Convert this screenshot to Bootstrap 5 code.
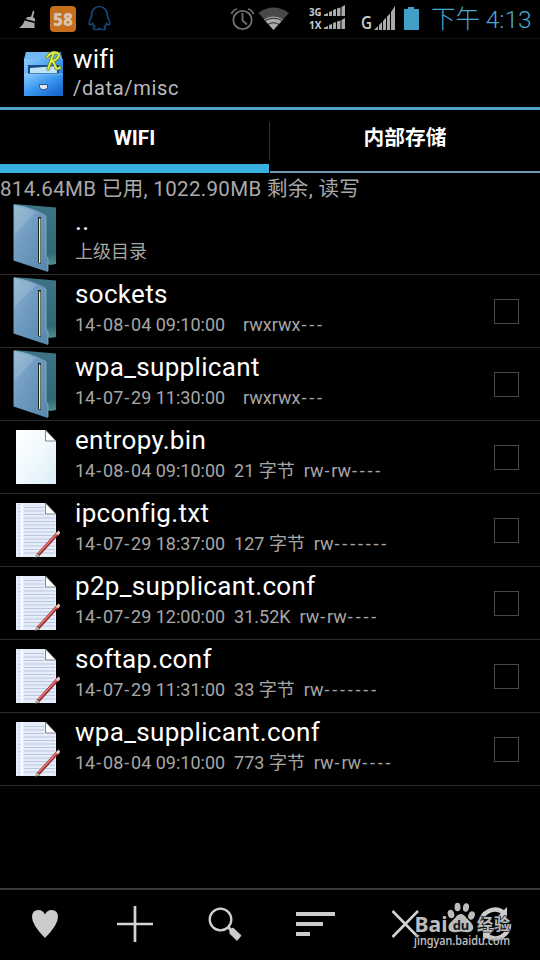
<!DOCTYPE html>
<html lang="zh-CN">
<head>
<meta charset="utf-8">
<meta name="viewport" content="width=device-width, initial-scale=1">
<title>wifi</title>
<link href="https://cdn.jsdelivr.net/npm/bootstrap@5.3.0/dist/css/bootstrap.min.css" rel="stylesheet">
<style>
body{background:#000;color:#fff;font-family:Roboto,"Noto Sans CJK SC",sans-serif;line-height:1}
.screen{width:540px;height:960px;overflow:hidden}
.screen svg{display:block;flex:none}
.statusbar{height:39px;border-bottom:1px solid #111;padding-left:18px}
.clock{color:#4aa9cf;font-size:24.5px;font-weight:300;white-space:nowrap;line-height:39px;margin-left:12px;letter-spacing:-.05px}
.appbar{height:71px;border-bottom:3px solid #4fa5c8;padding-left:22px}
.apptitle{font-size:26px;line-height:33px;letter-spacing:.1px}
.apppath{font-size:20px;line-height:25px;letter-spacing:.7px;color:#bbb}
.tabs{height:63px}
.tab{font-size:20.700px;font-weight:700;line-height:56px;border:0 solid #38b1e0;text-align:center}
.tab-on{width:269px;height:63px;border-bottom-width:9px}
.tab-off{width:270px;border-bottom:2px solid #6f9ab8}
.tabsep{width:1px;height:38px;background:#333;margin-top:12px}
.usage{height:29px;font-size:20.500px;line-height:32px;color:#aaa;white-space:pre;letter-spacing:.34px}
.entry{height:73px;border-bottom:1px solid #2c2c2c;padding-left:12px}
.entry-text{width:414px;margin-left:15px}
.entry-name{font-size:26px;line-height:32px;letter-spacing:.32px;margin-top:3px}
.entry-info{font-size:18px;line-height:22px;margin-top:4px;color:#a6a6a6;white-space:pre}
.dash{letter-spacing:2.800px;margin-left:1px;margin-right:-1px}
.box{width:25px;height:25px;border:1px solid #484848;margin:24px 0 0 5px}
.toolbar{height:72px;border-top:2px solid #393939}
.tool{width:90px}
.stamp{left:405px;top:890px}
.stamp text{font-family:"Noto Sans","Noto Sans CJK SC",sans-serif}
</style>
</head>
<body>
<svg width="0" height="0" class="position-absolute">
<defs>
<linearGradient id="gf" x1="0" y1="0" x2="1" y2="1"><stop offset="0" stop-color="#8fb5d0"/><stop offset=".45" stop-color="#6e9abf"/><stop offset="1" stop-color="#5687ad"/></linearGradient>
<linearGradient id="gb" x1="0" y1="0" x2="0" y2="1"><stop offset="0" stop-color="#3f7486"/><stop offset=".8" stop-color="#316777"/><stop offset="1" stop-color="#4d8f90"/></linearGradient>
<linearGradient id="gp" x1="0" y1="0" x2="1" y2="1"><stop offset="0" stop-color="#fff"/><stop offset=".5" stop-color="#f0f9fd"/><stop offset="1" stop-color="#dceef8"/></linearGradient>
<linearGradient id="gc" x1="0" y1="0" x2="1" y2="1"><stop offset="0" stop-color="#8accff"/><stop offset=".5" stop-color="#3b98ee"/><stop offset="1" stop-color="#1461c8"/></linearGradient>
<symbol id="folder" viewBox="0 0 48 72"><path d="M2 2 44 5.500V62l-6 1L8 50z" fill="url(#gb)"/><path d="M1.500 2.500Q20 5 34 13V54l2 3V70L1.500 58.500z" fill="url(#gf)"/><path d="M3 4Q14 6 24 10L3 32z" fill="#fff" opacity=".13"/><path d="M34 14V54l2 3V69" stroke="#8ab6c9" fill="none" stroke-width=".8"/><path d="M26 15h3v47l-3-1z" fill="#182829"/><path d="M27 16.500h1.400v44.500H27z" fill="#f2efb2"/></symbol>
<symbol id="page" viewBox="0 0 48 72"><path d="M4 9H33.500L44 20V63H4z" fill="url(#gp)"/><path d="M33.500 9V20H44z" fill="#fff" stroke="#666" stroke-width=".8"/></symbol>
<symbol id="note" viewBox="0 0 48 72"><path d="M4 9H33.500L44 20V63H4z" fill="#e6edfa"/><path d="M12 13.500H32M12 17H32M12 20.500H32M12 24H43M12 27.500H43M12 31H43M12 34.500H43M12 38H43M12 41.500H43M12 45H43M12 48.500H43M12 52H43M12 55.500H43M12 59H43" stroke="#bdc6df" stroke-width="1"/><path d="M7 10V63" stroke="#c3cce2" stroke-width="2" stroke-dasharray="1 2.500"/><path d="M10 9V63" stroke="#fff" stroke-width="1.500"/><path d="M33.500 9V20H44z" fill="#fff" stroke="#666" stroke-width=".8"/><path d="M26 61 46 39" stroke="#8d2f31" stroke-width="3.400"/><path d="M26.500 59.500 45.500 39" stroke="#e8706b" stroke-width="1.800"/><path d="M45 40.500 47.500 37.500" stroke="#e5c9bd" stroke-width="3"/><path d="M23.500 63.500 25 59.500 28 62z" fill="#d8c7a8" stroke="#555" stroke-width=".5"/></symbol>
</defs>
</svg>
<main class="screen d-flex flex-column position-relative">
<header class="statusbar d-flex">
<svg width="401" height="38" viewBox="18 0 401 38">
<path d="M33 10.500l1.500 1-1.500 5.500 2 2v2.500l-9.500-2.500 2-2 3.500-.3zM24.500 20.500l10 2.500V28H19q4-2.500 5.500-7.500z" fill="#aaa"/>
<rect x="50" y="6" width="26" height="26" rx="4" fill="#c56f1c"/>
<text x="63" y="25.500" text-anchor="middle" font-family="Open Sans,sans-serif" font-weight="800" font-size="17" fill="#d8c5b0">58</text>
<path d="M91.500 17C90.500 3 108 3 107.500 17q3 5 2 7.500-1 1-3-1-.5 2-2 3 2 3-.5 3h-3l-1.500-1-1.500 1h-3q-3-1-.5-3-1.500-1-2-3-2 2-3 1-1-3 2-7.500z" fill="none" stroke="#184475" stroke-width="1.700"/>
<g fill="none" stroke="#707070" stroke-width="1.800"><circle cx="242.500" cy="20" r="9.200"/><path d="M242.500 13v7.500l4.500 4M231.500 14Q233 10 237 9M253.500 14Q252 10 248 9"/></g>
<path d="M273.500 30 258.500 13Q273.500 2 289 13z" fill="#484848"/><path d="M273.500 30 264 19.500Q273.500 13.500 283 19.500z" fill="#aaa"/><path d="M265 20.500Q273.500 16 282 20.500M268 24.500Q273.500 21 279 24.500" stroke="#222" fill="none"/>
<g fill="#ccc" font-family="Open Sans,sans-serif" font-weight="700" font-size="11"><text x="309" y="16" textLength="12.500" lengthAdjust="spacingAndGlyphs">3G</text><text x="309" y="29" textLength="12.500" lengthAdjust="spacingAndGlyphs">1X</text></g>
<g fill="#aaa"><path d="M324 16v-1.500l4-1.500v3zM329 16v-4l3-1v5zM333 16v-6l3-1v7zM337 16V8.500l3.500-1V16zM341.500 16V7l3.500-2v11zM324 29v-1.500l4-1.500v3zM329 29v-4l3-1v5zM333 29v-6l3-1v7zM337 29v-7.500l3.500-1V29zM341.500 29v-9l3.500-2v11z"/>
<path d="M374 30l4-4v4zM379 30v-5l3-3v8zM383 30v-9l3-3.500V30zM387 30V16.500l3-3V30zM391 30V12l4-6v24z"/></g>
<text x="361" y="29" font-family="Open Sans,sans-serif" font-weight="600" font-size="18" fill="#ccc" textLength="11" lengthAdjust="spacingAndGlyphs">G</text>
<path d="M408 7h6v2h5v21h-15V9h4z" fill="#429fc6"/>
</svg>
<div class="clock">下午 4:13</div>
</header>
<section class="appbar d-flex align-items-start">
<svg width="51" height="68" viewBox="22 0 51 68">
<path d="M26 13H61L63 25V57H24V25z" fill="#2e86d8"/><path d="M26 13H60L62 20H24z" fill="#71b8f4"/><path d="M24 20H63V57H24z" fill="url(#gc)"/><path d="M28 26H59V35H28z" fill="#174a84"/><path d="M30 29 57 27V34H30z" fill="#bfe4f9"/><path d="M24.500 35H62.500V55H24.500z" fill="url(#gc)"/><path d="M24.500 35H62.500" stroke="#92cefb" stroke-width=".8"/><path d="M39.500 45.500h8v3q-1 2-3 2h-2q-3 0-3-3z" fill="#dfe5ec" stroke="#153d78" stroke-width=".8"/>
<path d="M47 18q3-4 7-4.500 7 0 4 5-2 3-7 4 3 0 4 4 1 5 5 2M53.500 14.500 48 30" fill="none" stroke="#587223" stroke-width="3.400" stroke-linecap="round"/><path d="M47 18q3-4 7-4.500 7 0 4 5-2 3-7 4 3 0 4 4 1 5 5 2M53.500 14.500 48 30" fill="none" stroke="#dfee48" stroke-width="2" stroke-linecap="round"/>
</svg>
<div class="pt-1"><div class="apptitle">wifi</div><div class="apppath">/data/misc</div></div>
</section>
<nav class="tabs d-flex"><div class="tab tab-on">WIFI</div><div class="tabsep"></div><div class="tab tab-off">内部存储</div></nav>
<div class="usage">814.64MB 已用, 1022.90MB 剩余, 读写</div>
<section class="flex-grow-1">
<div class="entry d-flex"><svg width="48" height="72"><use href="#folder"/></svg><div class="entry-text"><div class="entry-name">..</div><div class="entry-info">上级目录</div></div></div>
<div class="entry d-flex"><svg width="48" height="72"><use href="#folder"/></svg><div class="entry-text"><div class="entry-name">sockets</div><div class="entry-info">14<span class="dash">-</span>08<span class="dash">-</span>04 09:10:00    rwxrwx<span class="dash">---</span></div></div><div class="box"></div></div>
<div class="entry d-flex"><svg width="48" height="72"><use href="#folder"/></svg><div class="entry-text"><div class="entry-name">wpa_supplicant</div><div class="entry-info">14<span class="dash">-</span>07<span class="dash">-</span>29 11:30:00    rwxrwx<span class="dash">---</span></div></div><div class="box"></div></div>
<div class="entry d-flex"><svg width="48" height="72"><use href="#page"/></svg><div class="entry-text"><div class="entry-name">entropy.bin</div><div class="entry-info">14<span class="dash">-</span>08<span class="dash">-</span>04 09:10:00  21 字节  rw<span class="dash">-</span>rw<span class="dash">----</span></div></div><div class="box"></div></div>
<div class="entry d-flex"><svg width="48" height="72"><use href="#note"/></svg><div class="entry-text"><div class="entry-name">ipconfig.txt</div><div class="entry-info">14<span class="dash">-</span>07<span class="dash">-</span>29 18:37:00  127 字节  rw<span class="dash">-------</span></div></div><div class="box"></div></div>
<div class="entry d-flex"><svg width="48" height="72"><use href="#note"/></svg><div class="entry-text"><div class="entry-name">p2p_supplicant.conf</div><div class="entry-info">14<span class="dash">-</span>07<span class="dash">-</span>29 12:00:00  31.52K  rw<span class="dash">-</span>rw<span class="dash">----</span></div></div><div class="box"></div></div>
<div class="entry d-flex"><svg width="48" height="72"><use href="#note"/></svg><div class="entry-text"><div class="entry-name">softap.conf</div><div class="entry-info">14<span class="dash">-</span>07<span class="dash">-</span>29 11:31:00  33 字节  rw<span class="dash">-------</span></div></div><div class="box"></div></div>
<div class="entry d-flex"><svg width="48" height="72"><use href="#note"/></svg><div class="entry-text"><div class="entry-name">wpa_supplicant.conf</div><div class="entry-info">14<span class="dash">-</span>08<span class="dash">-</span>04 09:10:00  773 字节  rw<span class="dash">-</span>rw<span class="dash">----</span></div></div><div class="box"></div></div>
</section>
<footer class="toolbar d-flex">
<svg class="tool" height="70" viewBox="0 0 90 70"><path d="M45 48Q32 35 32 27 32 20 38.500 20 43 20 45 24.500 47 20 51.500 20 58 20 58 27 58 35 45 48z" fill="#ccc"/></svg>
<svg class="tool" height="70" viewBox="0 0 90 70"><path d="M27 34H63M45 16V52" stroke="#d4d4d4" stroke-width="2.700"/></svg>
<svg class="tool" height="70" viewBox="0 0 90 70"><circle cx="40.500" cy="29.500" r="10.800" fill="none" stroke="#d0d0d0" stroke-width="2.300"/><path d="M48 37l4 4" stroke="#ccc" stroke-width="3"/><path d="M50 40l3-2 8 7.500-4 5-7-7z" fill="#ccc" stroke="#ccc" stroke-linejoin="round"/></svg>
<svg class="tool" height="70" viewBox="0 0 90 70"><path d="M26 24H65M26 34H53M26 44H40" stroke="#ccc" stroke-width="4"/></svg>
<svg class="tool" height="70" viewBox="0 0 90 70"><path d="M32.500 21 58 47M58 21 32.500 47" stroke="#d4d4d4" stroke-width="2.500"/></svg>
<svg class="tool" height="70" viewBox="0 0 90 70"><path d="M31 34A14 14 0 0 1 54 23M59 34A14 14 0 0 1 36 45" fill="none" stroke="#ccc" stroke-width="4.500"/><path d="M57 17V30H44zM33 51V38H46z" fill="#ccc"/></svg>
</footer>
<svg class="stamp position-absolute" width="125" height="70" viewBox="405 890 125 70">
<g fill="#bcbcbc">
<text x="414.500" y="932" font-size="22" font-weight="700" textLength="33" lengthAdjust="spacingAndGlyphs">Bai</text>
<ellipse cx="451" cy="914" rx="3.200" ry="4.300" transform="rotate(-18 451 914)"/><ellipse cx="457.500" cy="907" rx="3" ry="4.300"/><ellipse cx="466" cy="907.500" rx="3" ry="4.300" transform="rotate(10 466 907.500)"/><ellipse cx="471.500" cy="915.500" rx="3.200" ry="4.200" transform="rotate(22 471.500 915.500)"/>
<path d="M461 914q3 0 5 3.500l5 5q4 5 1 8-2 2.500-7 1.500-4-1-8 0-5 1-7.500-1.500-2.500-4 1-8l5-5q2-3.500 5.500-3.500z"/>
<text x="477" y="930" font-size="16" font-weight="700" stroke="#161616" stroke-width="1.500" paint-order="stroke" textLength="33">经验</text>
<text x="414" y="944.500" font-size="12" font-weight="500" fill="#c5c5c5" stroke="#222" stroke-width=".4" paint-order="stroke" textLength="96" lengthAdjust="spacingAndGlyphs">jingyan.baidu.com</text>
</g>
<text x="461" y="929.500" text-anchor="middle" font-size="13" font-weight="700" fill="#181818">du</text>
</svg>
</main>
<script src="https://cdn.jsdelivr.net/npm/bootstrap@5.3.0/dist/js/bootstrap.bundle.min.js"></script>
</body>
</html>
